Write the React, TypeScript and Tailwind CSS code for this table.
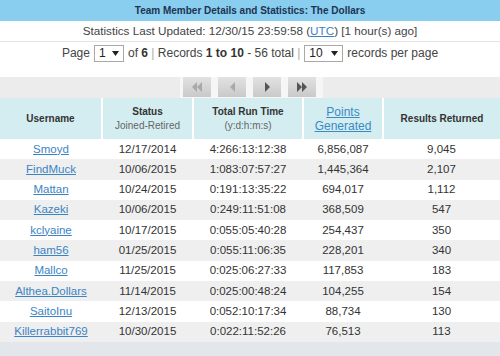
import React from "react";

const rows = [
  ["Smoyd", "12/17/2014", "4:266:13:12:38", "6,856,087", "9,045"],
  ["FindMuck", "10/06/2015", "1:083:07:57:27", "1,445,364", "2,107"],
  ["Mattan", "10/24/2015", "0:191:13:35:22", "694,017", "1,112"],
  ["Kazeki", "10/06/2015", "0:249:11:51:08", "368,509", "547"],
  ["kclyaine", "10/17/2015", "0:055:05:40:28", "254,437", "350"],
  ["ham56", "01/25/2015", "0:055:11:06:35", "228,201", "340"],
  ["Mallco", "11/25/2015", "0:025:06:27:33", "117,853", "183"],
  ["Althea.Dollars", "11/14/2015", "0:025:00:48:24", "104,255", "154"],
  ["SaitoInu", "12/13/2015", "0:052:10:17:34", "88,734", "130"],
  ["Killerrabbit769", "10/30/2015", "0:022:11:52:26", "76,513", "113"],
];

function NavBtn({ children }: { children: React.ReactNode }) {
  return (
    <div className="w-[28px] h-[20px] flex items-center justify-center bg-gradient-to-b from-[#e2e2e2] to-[#c9c9c9]">
      {children}
    </div>
  );
}

function Select({ value, w }: { value: string; w: string }) {
  return (
    <span className={`inline-flex items-center justify-between ${w} h-[17px] border border-[#a9a9a9] bg-white px-[4px] align-middle text-[12px] text-[#222]`}>
      <span>{value}</span>
      <svg width="7" height="5" viewBox="0 0 7 5"><path d="M0 0h7L3.5 5z" fill="#222" /></svg>
    </span>
  );
}

export default function App() {
  return (
    <div className="w-[500px] h-[356px] bg-white overflow-hidden" style={{ fontFamily: '"Liberation Sans", Arial, sans-serif' }}>
      <div className="h-[21px] bg-[#89cdef] flex items-center justify-center text-[10px] font-bold text-[#1c3452]">
        Team Member Details and Statistics: The Dollars
      </div>
      <div className="h-[21px] flex items-center justify-center text-[11.7px] text-[#444] border-b border-[#e4e4e4]">
        <span>
          Statistics Last Updated: 12/30/15 23:59:58 (<span className="text-[#3b7fc4] underline">UTC</span>) [1 hour(s) ago]
        </span>
      </div>
      <div className="h-[22px] flex items-center justify-center text-[12px] text-[#444] gap-[4px]">
        <span>Page</span>
        <Select value="1" w="w-[30px]" />
        <span>
          of <b className="text-[#333]">6</b> <span className="text-[#aaa]">|</span> Records <b className="text-[#333]">1 to 10</b> - 56 total{" "}
          <span className="text-[#aaa]">|</span>
        </span>
        <Select value="10" w="w-[39px]" />
        <span>records per page</span>
      </div>
      <div className="h-[13px]" />
      <div className="h-[21px] bg-[#ececec] flex">
        <div className="w-[180px]" />
        <div className="w-[143px] bg-[#f6f6f6] flex items-start gap-[7px] pl-[3px]">
          <NavBtn>
            <svg width="12" height="10" viewBox="0 0 12 10">
              <path d="M6 0v10L1 5z M11 0v10L6 5z" fill="#a9a9a9" />
            </svg>
          </NavBtn>
          <NavBtn>
            <svg width="7" height="10" viewBox="0 0 7 10">
              <path d="M6 0v10L1 5z" fill="#a9a9a9" />
            </svg>
          </NavBtn>
          <NavBtn>
            <svg width="7" height="10" viewBox="0 0 7 10">
              <path d="M1 0v10L6 5z" fill="#555" />
            </svg>
          </NavBtn>
          <NavBtn>
            <svg width="12" height="10" viewBox="0 0 12 10">
              <path d="M1 0v10L6 5z M6 0v10L11 5z" fill="#555" />
            </svg>
          </NavBtn>
        </div>
        <div className="flex-1" />
      </div>
      <table className="w-[500px] border-collapse table-fixed">
        <colgroup>
          <col className="w-[102px]" />
          <col className="w-[91px]" />
          <col className="w-[110px]" />
          <col className="w-[80px]" />
          <col className="w-[117px]" />
        </colgroup>
        <thead>
          <tr className="h-[41px] bg-[#d3edf0] text-[10px] text-[#333]">
            <th className="border-r-2 border-white font-bold align-middle">Username</th>
            <th className="border-r-2 border-white align-middle">
              <div className="font-bold leading-[14px]">Status</div>
              <div className="font-normal text-[#666] leading-[14px]">Joined-Retired</div>
            </th>
            <th className="border-r-2 border-white align-middle">
              <div className="font-bold leading-[14px]">Total Run Time</div>
              <div className="font-normal text-[#666] leading-[14px]">(y:d:h:m:s)</div>
            </th>
            <th className="border-r-2 border-white align-middle text-[12px] font-normal leading-[14px] text-[#3b8ac6] underline">
              Points
              <br />
              Generated
            </th>
            <th className="font-bold align-middle">Results Returned</th>
          </tr>
        </thead>
        <tbody>
          {rows.map((r, i) => (
            <tr key={r[0]} className={`h-[20.3px] text-[11.5px] text-[#333] text-center ${i % 2 ? "bg-[#efefef]" : "bg-white"}`}>
              <td className="p-0">
                <span className="text-[#3b84c4] underline">{r[0]}</span>
              </td>
              <td className="p-0">{r[1]}</td>
              <td className="p-0">{r[2]}</td>
              <td className="p-0">{r[3]}</td>
              <td className="p-0">{r[4]}</td>
            </tr>
          ))}
        </tbody>
      </table>
      <div className="h-[20px] bg-[#e3e7ec]" />
    </div>
  );
}
